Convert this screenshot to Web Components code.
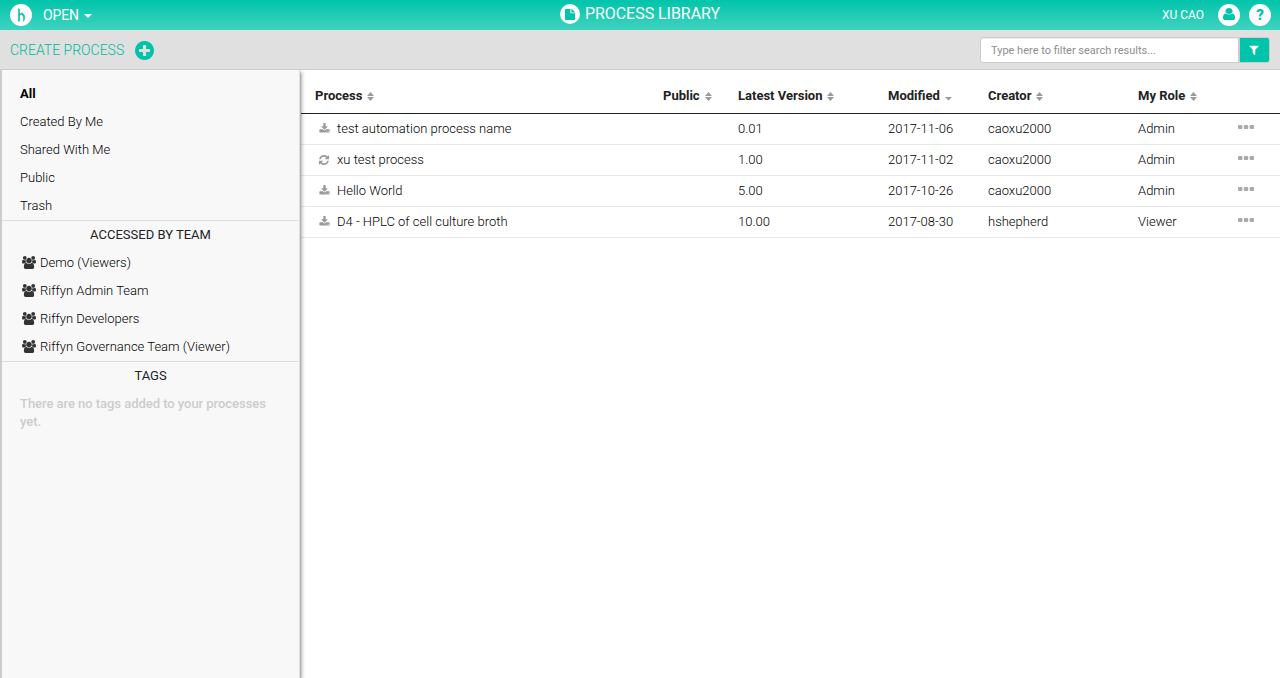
<!DOCTYPE html>
<html lang="en">
<head>
<meta charset="utf-8">
<title>Process Library</title>
<style>
html, body { margin: 0; height: 100%; overflow: hidden; }
body { font-family: Roboto, "Liberation Sans", sans-serif; font-size: 14px; line-height: 20px; color: #222; background: #fff; }
</style>
</head>
<body>
<library-app></library-app>
<script>
const define = (name, template) => customElements.define(name, class extends HTMLElement {
  connectedCallback() {
    if (this.shadowRoot) return;
    const root = this.attachShadow({ mode: "open" });
    root.innerHTML = typeof template === "function" ? template(this) : template;
  }
});

const ICONS = {
  download: ["0 0 1792 1792", "M1344 1344q0-26-19-45t-45-19-45 19-19 45 19 45 45 19 45-19 19-45zm256 0q0-26-19-45t-45-19-45 19-19 45 19 45 45 19 45-19 19-45zm128-224v320q0 40-28 68t-68 28h-1472q-40 0-68-28t-28-68v-320q0-40 28-68t68-28h465l135 136q58 56 136 56t136-56l136-136h464q40 0 68 28t28 68zm-325-569q17 41-14 70l-448 448q-18 19-45 19t-45-19l-448-448q-31-29-14-70 17-39 59-39h256v-448q0-26 19-45t45-19h256q26 0 45 19t19 45v448h256q42 0 59 39z"],
  refresh: ["128 128 1536 1536", "M1639 1056q0 5-1 7-64 268-268 434.5t-478 166.5q-146 0-282.5-55t-243.5-157l-129 129q-19 19-45 19t-45-19-19-45v-448q0-26 19-45t45-19h448q26 0 45 19t19 45-19 45l-137 137q71 66 161 102t187 36q134 0 250-65t186-179q11-17 53-117 8-23 30-23h192q13 0 22.5 9.5t9.5 22.5zm25-800v448q0 26-19 45t-45 19h-448q-26 0-45-19t-19-45 19-45l138-138q-148-137-349-137-134 0-250 65t-186 179q-11 17-53 117-8 23-30 23h-199q-13 0-22.5-9.5t-9.5-22.5v-7q65-268 270-434.5t480-166.5q146 0 284 55.5t245 156.5l130-129q19-19 45-19t45 19 19 45z"],
  plus: ["128 128 1536 1536", "M1344 960v-128q0-26-19-45t-45-19h-256v-256q0-26-19-45t-45-19h-128q-26 0-45 19t-19 45v256h-256q-26 0-45 19t-19 45v128q0 26 19 45t45 19h256v256q0 26 19 45t45 19h128q26 0 45-19t19-45v-256h256q26 0 45-19t19-45zm320-64q0 209-103 385.5t-279.5 279.5-385.5 103-385.5-103-279.5-279.5-103-385.5 103-385.5 279.5-279.5 385.5-103 385.5 103 279.5 279.5 103 385.5z"],
  group: ["64 0 1920 1792", "M657 896q-162 5-265 128h-134q-82 0-138-40.5t-56-118.5q0-353 124-353 6 0 43.5 21t97.5 42.5 119 21.5q67 0 133-23-5 37-5 66 0 139 81 256zm1071 637q0 120-73 189.5t-194 69.5h-874q-121 0-194-69.5t-73-189.5q0-53 3.5-103.5t14-109 26.5-108.5 43-97.5 62-81 85.5-53.5 111.5-20q10 0 43 21.5t73 48 107 48 135 21.5 135-21.5 107-48 73-48 43-21.5q61 0 111.5 20t85.5 53.5 62 81 43 97.5 26.5 108.5 14 109 3.5 103.5zm-1024-1277q0 106-75 181t-181 75-181-75-75-181 75-181 181-75 181 75 75 181zm704 384q0 159-112.5 271.5t-271.5 112.5-271.5-112.5-112.5-271.5 112.5-271.5 271.5-112.5 271.5 112.5 112.5 271.5zm576 225q0 78-56 118.5t-138 40.5h-134q-103-123-265-128 81-117 81-256 0-29-5-66 66 23 133 23 59 0 119-21.5t97.5-42.5 43.5-21q124 0 124 353zm-128-609q0 106-75 181t-181 75-181-75-75-181 75-181 181-75 181 75 75 181z"],
  filter: ["128 128 1536 1536", "M1595 295q17 41-14 70l-493 493v742q0 42-39 59-13 5-25 5-27 0-45-19l-256-256q-19-19-19-45v-486l-493-493q-31-29-14-70 17-39 59-39h1280q42 0 59 39z"],
  user: ["256 128 1280 1536", "M1536 1399q0 109-62.5 187t-150.5 78h-854q-88 0-150.5-78t-62.5-187q0-85 8.5-160.5t31.5-152 58.5-131 94-89 134.5-34.5q131 128 313 128t313-128q76 0 134.5 34.5t94 89 58.5 131 31.5 152 8.5 160.5zm-256-887q0 159-112.5 271.5t-271.5 112.5-271.5-112.5-112.5-271.5 112.5-271.5 271.5-112.5 271.5 112.5 112.5 271.5z"],
  file: ["0 0 10 11", "M.8 0H5.4V4.2H10V10.2Q10 11 9.2 11H.8Q0 11 0 10.2V.8Q0 0 .8 0ZM6.3 0Q7 .1 7.4 .6L9.5 2.7Q9.9 3 10 3.5H6.3Z"],
  sort: ["0 0 7 9", "M0 3.9L3.5 0L7 3.9ZM0 5.1H7L3.5 9Z"],
  desc: ["0 0 7 9", "M0 5.1H7L3.5 8.6Z"],
  caret: ["0 0 8 4", "M0 0H8L4 4Z"],
  dots: ["0 0 16 4", "M1 0h2.4q1 0 1 1v2q0 1-1 1H1Q0 4 0 3V1Q0 0 1 0zM6.8 0h2.4q1 0 1 1v2q0 1-1 1H6.8q-1 0-1-1V1q0-1 1-1zM12.6 0H15q1 0 1 1v2q0 1-1 1h-2.4q-1 0-1-1V1q0-1 1-1z"]
};

define("ui-icon", el => {
  const [box, d] = ICONS[el.getAttribute("name")];
  return `<style>:host{display:inline-flex;flex:none;width:12px;height:12px}svg{display:block;width:100%;height:100%;fill:currentColor}</style>
  <svg viewBox="${box}" preserveAspectRatio="none"><path d="${d}"/></svg>`;
});

define("round-badge", `<style>
:host{display:flex;flex:none;align-items:center;justify-content:center;width:22px;height:22px;border-radius:50%;background:#fff;color:#00c4aa}
</style><slot></slot>`);

define("app-header", `<style>
:host{display:grid;grid-template-columns:1fr auto 1fr;height:30px;color:#fff;background:linear-gradient(#00c4aa,#40d3bf);box-sizing:border-box;padding:0 9px 0 10px}
div{display:flex;align-items:center}
.left svg{display:block;width:22px;height:22px}
.open{margin-left:11px;letter-spacing:-.15px}
.caret{width:8px;height:4px;margin:2px 0 0 5px}
.title{font-size:16px;gap:5px;height:28px;letter-spacing:-.04px;margin-left:-1px}
.title round-badge{width:20px;height:20px}
.title ui-icon{width:10px;height:11px}
.right{justify-content:flex-end;height:29px}
.name{font-size:12px;margin-right:14px}
.help{margin-left:9px;font-weight:900;font-size:15px}
.user{width:12px;height:12px;margin-bottom:1px}
</style>
<div class="left"><svg viewBox="0 0 22 22"><circle cx="11" cy="11" r="11" fill="#fff"/><path d="M8.2 4.2L9.9 5.4V17L8.2 17.8ZM9.9 9.8L12 8.6L14.8 11.6V15.6L13.2 18.2V12.4L11.6 10.6L9.9 11.4Z" fill="#00c4aa"/></svg><span class="open">OPEN</span><ui-icon class="caret" name="caret"></ui-icon></div>
<div class="title"><round-badge><ui-icon name="file"></ui-icon></round-badge><span>PROCESS LIBRARY</span></div>
<div class="right"><span class="name">XU CAO</span><round-badge><ui-icon class="user" name="user"></ui-icon></round-badge><round-badge class="help">?</round-badge></div>`);

define("search-box", `<style>
:host{display:flex;width:290px;height:26px;font-size:11px}
input{box-sizing:border-box;width:259px;height:26px;border:1px solid #ccc;border-radius:3px 0 0 3px;padding:1px 10px 0;background:#fff;font:inherit;color:#555;outline:0;box-shadow:inset 0 1px 1px rgba(0,0,0,.075)}
input::placeholder{color:#8d8d8d;opacity:1}
button{box-sizing:border-box;width:31px;height:26px;border:1px solid #ccc;border-radius:0 3px 3px 0;padding:0 1px 0 0;background:#00c4aa;color:#fff;display:flex;align-items:center;justify-content:center}
ui-icon{width:10px;height:10px}
</style><input placeholder="Type here to filter search results..." aria-label="Filter"><button aria-label="Apply filter"><ui-icon name="filter"></ui-icon></button>`);

define("tool-bar", `<style>
:host{display:flex;align-items:center;justify-content:space-between;height:40px;box-sizing:border-box;border-bottom:1px solid #ccc;background:#e0e0e0;padding:0 10px}
.create{display:flex;align-items:center;color:#00b89f;font-weight:300;height:41px}
.create ui-icon{width:19px;height:19px;margin:1px 0 0 11px;color:#00c4aa}
</style><div class="create"><span>CREATE PROCESS</span><ui-icon name="plus"></ui-icon></div><search-box></search-box>`);

define("nav-item", el => `<style>
:host{display:flex;align-items:center;height:28px;padding-left:18px;color:#000;font-size:13px;font-weight:300;white-space:nowrap}
:host([selected]){font-weight:700}
ui-icon{width:14px;height:13px;margin:0 4px 1px 2px;color:#333}
</style>${el.hasAttribute("team") ? '<ui-icon name="group"></ui-icon>' : ""}<span><slot></slot></span>`);

define("nav-section", el => `<style>
:host{display:block;border-top:1px solid #ddd}
h2{margin:0;height:28px;line-height:27px;text-align:center;font-size:13px;font-weight:400;color:#222}
</style><h2>${el.getAttribute("heading")}</h2><slot></slot>`);

define("side-nav", `<style>
:host{display:block;box-sizing:border-box;width:300px;flex:none;background:#f8f8f8;border-left:2px solid #ccc;border-right:1px solid #ddd;padding-top:10px;box-shadow:1px 2px 4px rgba(0,0,0,.5);position:relative;z-index:1}
.top{height:140px}
p{margin:0;padding:5px 18px;font-size:13px;line-height:18px;font-weight:500;letter-spacing:-.04px;color:#ccc}
</style>
<div class="top"><nav-item selected>All</nav-item><nav-item>Created By Me</nav-item><nav-item>Shared With Me</nav-item><nav-item>Public</nav-item><nav-item>Trash</nav-item></div>
<nav-section heading="ACCESSED BY TEAM"><nav-item team>Demo (Viewers)</nav-item><nav-item team>Riffyn Admin Team</nav-item><nav-item team>Riffyn Developers</nav-item><nav-item team>Riffyn Governance Team (Viewer)</nav-item></nav-section>
<nav-section heading="TAGS"><p>There are no tags added to your processes yet.</p></nav-section>`);

const COLUMNS = "348px 75px 150px 100px 150px 100px 1fr";

define("table-head", () => `<style>
:host{display:grid;grid-template-columns:${COLUMNS};height:44px;box-sizing:border-box;padding:8px 0 0 14px;border-bottom:1px solid #222;font-size:13px;font-weight:700;align-items:center}
span{display:flex;align-items:center}
ui-icon{width:7px;height:9px;margin:1px 0 0 5px;color:#999}
</style>${[["Process", "sort"], ["Public", "sort"], ["Latest Version", "sort"], ["Modified", "desc"], ["Creator", "sort"], ["My Role", "sort"]].map(([t, i]) => `<span>${t}<ui-icon name="${i}"></ui-icon></span>`).join("")}`);

define("process-row", el => {
  const a = n => el.getAttribute(n);
  return `<style>
:host{display:grid;grid-template-columns:${COLUMNS};height:31px;box-sizing:border-box;padding-left:14px;border-bottom:1px solid #e8e8e8;font-size:13px;font-weight:300;align-items:center;color:#000}
.name{display:flex;align-items:center}
.name ui-icon{width:11px;height:11px;margin:0 7px 2px 4px;color:#999}
.name ui-icon[name=refresh]{width:10px;height:10px;margin:0 8px 1px 4px}
.dots{width:16px;height:4px;margin:0 0 4px;color:#aaa}
</style><span class="name"><ui-icon name="${a("icon")}"></ui-icon><slot></slot></span><span></span><span>${a("version")}</span><span>${a("modified")}</span><span>${a("creator")}</span><span>${a("role")}</span><ui-icon class="dots" name="dots"></ui-icon>`;
});

define("process-table", `<style>:host{display:block;flex:1;min-width:0;margin-left:1px}</style>
<table-head></table-head>
<process-row icon="download" version="0.01" modified="2017-11-06" creator="caoxu2000" role="Admin">test automation process name</process-row>
<process-row icon="refresh" version="1.00" modified="2017-11-02" creator="caoxu2000" role="Admin">xu test process</process-row>
<process-row icon="download" version="5.00" modified="2017-10-26" creator="caoxu2000" role="Admin">Hello World</process-row>
<process-row icon="download" version="10.00" modified="2017-08-30" creator="hshepherd" role="Viewer">D4 - HPLC of cell culture broth</process-row>`);

define("library-app", `<style>
:host{display:flex;flex-direction:column;height:100vh}
main{display:flex;flex:1;min-height:0;overflow:hidden}
</style><app-header></app-header><tool-bar></tool-bar><main><side-nav></side-nav><process-table></process-table></main>`);
</script>
</body>
</html>
